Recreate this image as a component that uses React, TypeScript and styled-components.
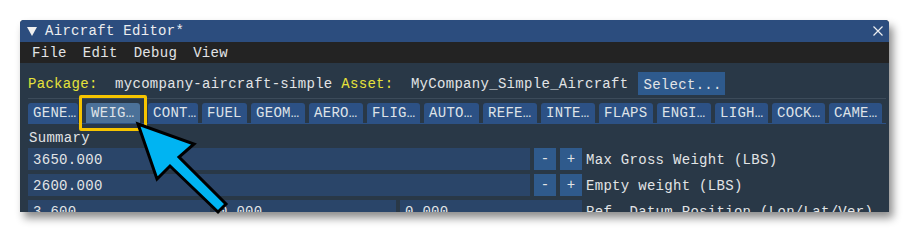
import React from "react";
import styled, { createGlobalStyle, css } from "styled-components";

const GlobalStyle = createGlobalStyle`
  html, body {
    margin: 0;
    padding: 0;
    background: #ffffff;
  }
  * {
    box-sizing: border-box;
  }
`;

const mono = css`
  font-family: "Liberation Mono", "DejaVu Sans Mono", monospace;
  font-size: 14px;
  letter-spacing: 0.3px;
  color: #e2e4e6;
`;

type TabDef = { label: string; width: number; active?: boolean };

const tabs: TabDef[] = [
  { label: "GENE…", width: 50 },
  { label: "WEIG…", width: 54, active: true },
  { label: "CONT…", width: 50 },
  { label: "FUEL", width: 45 },
  { label: "GEOM…", width: 54 },
  { label: "AERO…", width: 54 },
  { label: "FLIG…", width: 53 },
  { label: "AUTO…", width: 55 },
  { label: "REFE…", width: 54 },
  { label: "INTE…", width: 54 },
  { label: "FLAPS", width: 54 },
  { label: "ENGI…", width: 54 },
  { label: "LIGH…", width: 53 },
  { label: "COCK…", width: 53 },
  { label: "CAME…", width: 53 },
];

const App = () => {
  return (
    <>
      <GlobalStyle />
      <Stage>
        <EditorWindow>
          <TitleBar>
            <CollapseIcon width="10" height="9" viewBox="0 0 10 9">
              <polygon points="0,0 10,0 5,9" fill="#f0f0f0" />
            </CollapseIcon>
            <TitleText>Aircraft Editor*</TitleText>
            <CloseIcon width="10" height="10" viewBox="0 0 10 10">
              <path d="M0.5 0.5 L9.5 9.5 M9.5 0.5 L0.5 9.5" stroke="#eef0f2" strokeWidth="1.2" />
            </CloseIcon>
          </TitleBar>

          <MenuBar>
            <MenuItem>File</MenuItem>
            <MenuItem>Edit</MenuItem>
            <MenuItem>Debug</MenuItem>
            <MenuItem>View</MenuItem>
          </MenuBar>

          <Body>
            <PackageRow>
              <PackageText>
                <Key>Package:</Key>
                {"  "}mycompany-aircraft-simple <Key>Asset:</Key>
                {"  "}MyCompany_Simple_Aircraft
              </PackageText>
              <SelectButton>Select...</SelectButton>
            </PackageRow>
            <Separator />

            <TabBar>
              {tabs.map((t) => (
                <Tab key={t.label} $width={t.width} $active={t.active}>
                  {t.label}
                </Tab>
              ))}
            </TabBar>

            <SectionLabel>Summary</SectionLabel>

            <Rows>
              <FieldRow>
                <Field>3650.000</Field>
                <StepButton>-</StepButton>
                <StepButton>+</StepButton>
                <FieldLabel>Max Gross Weight (LBS)</FieldLabel>
              </FieldRow>
              <FieldRow>
                <Field>2600.000</Field>
                <StepButton>-</StepButton>
                <StepButton>+</StepButton>
                <FieldLabel>Empty weight (LBS)</FieldLabel>
              </FieldRow>
              <FieldRow>
                <TripleField>
                  <Field>3.600</Field>
                  <Field>0.000</Field>
                  <Field>0.000</Field>
                </TripleField>
                <FieldLabel>Ref. Datum Position (Lon/Lat/Ver)</FieldLabel>
              </FieldRow>
            </Rows>
          </Body>
        </EditorWindow>

        <PointerArrow width="910" height="232" viewBox="0 0 910 232">
          <polygon
            points="138,124 194,144 179,157 226,204 218,212 170,166 157,179"
            fill="#00b4f2"
            stroke="#000000"
            strokeWidth="3"
            strokeLinejoin="miter"
          />
        </PointerArrow>
      </Stage>
    </>
  );
};

const Stage = styled.div`
  position: relative;
  width: 910px;
  height: 232px;
  padding: 20px 0 0 20px;
  overflow: hidden;
`;

const EditorWindow = styled.div`
  width: 869px;
  height: 192px;
  display: flex;
  flex-direction: column;
  overflow: hidden;
  background: #293847;
  border-radius: 4px 4px 0 0;
  box-shadow: 4px 6px 8px rgba(0, 0, 0, 0.45);
`;

const TitleBar = styled.div`
  height: 22px;
  flex-shrink: 0;
  display: flex;
  align-items: center;
  padding: 0 6px 0 7px;
  background: #2c4d7e;
`;

const CollapseIcon = styled.svg`
  flex-shrink: 0;
  display: block;
  margin-right: 8px;
`;

const TitleText = styled.span`
  ${mono}
  flex: 1;
  color: #eceef0;
`;

const CloseIcon = styled.svg`
  flex-shrink: 0;
  display: block;
`;

const MenuBar = styled.div`
  height: 21px;
  flex-shrink: 0;
  display: flex;
  align-items: center;
  gap: 16px;
  padding-left: 12px;
  background: #232323;
`;

const MenuItem = styled.span`
  ${mono}
`;

const Body = styled.div`
  flex: 1;
  display: flex;
  flex-direction: column;
  padding: 9px 3px 0 8px;
`;

const PackageRow = styled.div`
  height: 23px;
  display: flex;
  align-items: center;
  gap: 10px;
`;

const PackageText = styled.span`
  ${mono}
  white-space: pre;
`;

const Key = styled.span`
  color: #e6e23a;
`;

const SelectButton = styled.div`
  ${mono}
  height: 23px;
  width: 87px;
  padding: 2px 0 0 5px;
  display: flex;
  align-items: center;
  background: #2e5a8d;
`;

const Separator = styled.div`
  height: 1px;
  margin-top: 3px;
  background: #3c4b5a;
`;

const TabBar = styled.div`
  display: flex;
  gap: 4px;
  margin-top: 4px;
  border-bottom: 1px solid #2c5185;
`;

const Tab = styled.div<{ $width: number; $active?: boolean }>`
  ${mono}
  position: relative;
  width: ${(p) => p.$width}px;
  height: 20px;
  line-height: 20px;
  padding-left: 5px;
  white-space: nowrap;
  border-radius: 3px 3px 0 0;
  color: #dfe3e8;
  background: ${(p) => (p.$active ? "#4b7199" : "#2c5185")};
  ${(p) =>
    p.$active &&
    css`
      margin: 0 4px;
      &::after {
        content: "";
        position: absolute;
        top: -8px;
        bottom: -8px;
        left: -7px;
        right: -7px;
        border: 3px solid #f6c400;
        border-radius: 2px;
      }
    `}
`;

const SectionLabel = styled.div`
  ${mono}
  height: 24px;
  padding: 4px 0 0 1px;
  line-height: 20px;
`;

const Rows = styled.div`
  display: flex;
  flex-direction: column;
  gap: 4px;
`;

const FieldRow = styled.div`
  display: flex;
  gap: 4px;
  height: 22px;
  align-items: center;
`;

const Field = styled.div`
  ${mono}
  flex: 1;
  height: 22px;
  line-height: 22px;
  padding: 1px 0 0 5px;
  background: #2a4569;
`;

const TripleField = styled.div`
  width: 554px;
  display: flex;
  gap: 4px;
`;

const StepButton = styled.div`
  ${mono}
  width: 22px;
  height: 22px;
  flex-shrink: 0;
  display: flex;
  align-items: center;
  justify-content: center;
  letter-spacing: 0;
  background: #2f5a8c;
`;

const FieldLabel = styled.span`
  ${mono}
  width: 300px;
  flex-shrink: 0;
  padding-top: 2px;
  white-space: nowrap;
  overflow: hidden;
`;

const PointerArrow = styled.svg`
  position: absolute;
  top: 0;
  left: 0;
  pointer-events: none;
`;

export default App;
